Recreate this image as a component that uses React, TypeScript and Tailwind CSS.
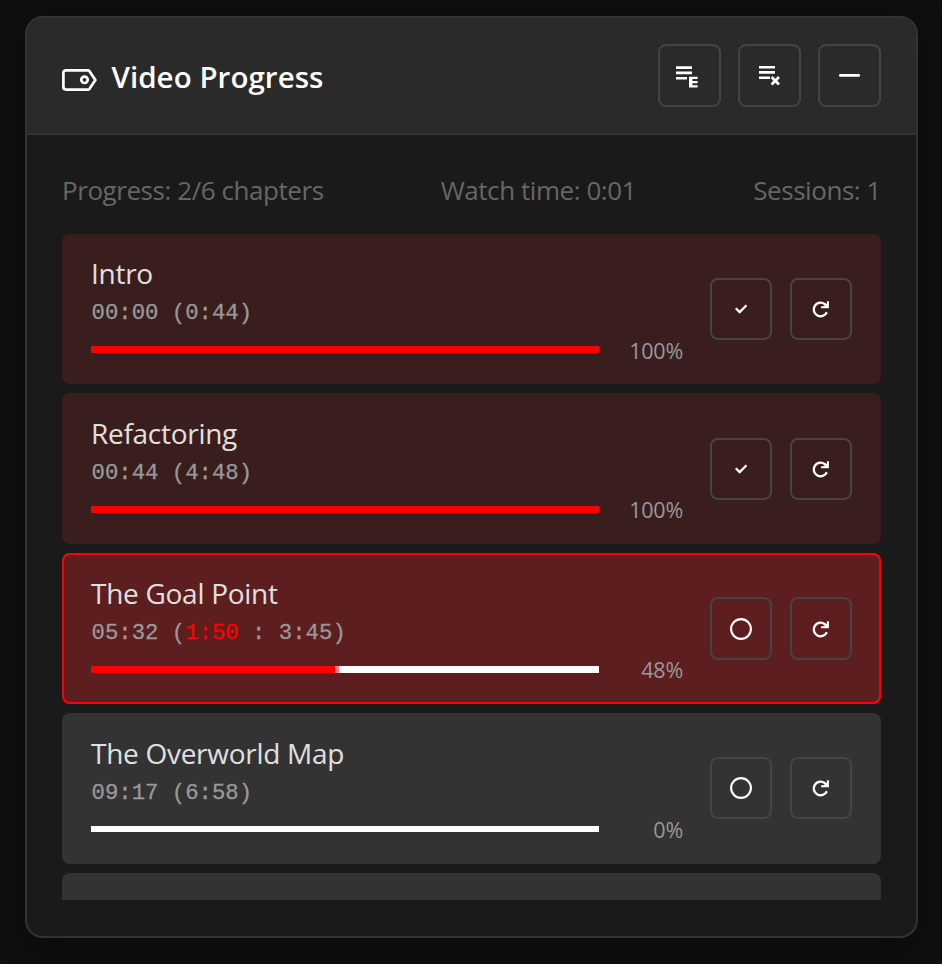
import type { ReactNode } from "react";

type Chapter = {
  title: string;
  start: string;
  length: string;
  elapsed?: string;
  percent: number;
  row: string;
  body: string;
  bar: string;
  controls: string;
  label: string;
};

const chapters: Chapter[] = [
  { title: "Intro", start: "00:00", length: "0:44", percent: 100, row: "h-[150px] bg-[#3a1e1e]", body: "", bar: "h-[7px]", controls: "mt-[44px] h-[62px]", label: "mt-[-9px]" },
  { title: "Refactoring", start: "00:44", length: "4:48", percent: 100, row: "h-[151px] bg-[#3a1e1e]", body: "pt-px", bar: "h-[7px]", controls: "mt-[45px] h-[62px]", label: "mt-[-10px]" },
  { title: "The Goal Point", start: "05:32", length: "3:45", elapsed: "1:50", percent: 48, row: "h-[151px] bg-[#5c1e1e] ring-2 ring-inset ring-[#ff0000]", body: "pt-px", bar: "h-[7px]", controls: "mt-[44px] h-[63px]", label: "mt-[-10px]" },
  { title: "The Overworld Map", start: "09:17", length: "6:58", percent: 0, row: "h-[151px] bg-[#333333]", body: "pt-px", bar: "h-[6px]", controls: "mt-[44px] h-[62px]", label: "mt-[-10px]" },
];

function HeaderButton({ label, children }: { label: string; children: ReactNode }) {
  return (
    <button aria-label={label} className="flex size-[63px] items-center justify-center rounded-lg border-2 border-[#444444]">
      {children}
    </button>
  );
}

function RowButton({ label, children }: { label: string; children: ReactNode }) {
  return (
    <button aria-label={label} className="flex h-full w-[62px] items-center justify-center rounded-lg border-2 border-[#444444]">
      {children}
    </button>
  );
}

function TagIcon() {
  return (
    <svg className="mt-[9px] h-[22px] w-[35px]" viewBox="0 0 35 22" fill="none" stroke="white" strokeWidth="2.7" strokeLinejoin="round">
      <path d="M4 1.4h21.8c.7 0 1.3.3 1.7.8L33.4 11l-5.9 8.8c-.4.5-1 .8-1.7.8H4c-1.5 0-2.6-1-2.6-2.5V3.9C1.4 2.4 2.5 1.4 4 1.4Z" />
      <circle cx="22.5" cy="10.8" r="3.2" />
    </svg>
  );
}

function ExportIcon() {
  return (
    <svg className="size-[59px] shrink-0" viewBox="0 0 59 59" fill="white">
      <path d="M16 20.2h16v2.7H16zM16 25.6h16v2.7H16zM16 31h11v2.6H16z" />
      <path d="M29 30.7h8.6V33h-5.2v2.1h5.2v2.2h-5.2v1.9h5.2v2.4H29z" />
    </svg>
  );
}

function ClearIcon() {
  return (
    <svg className="size-[59px] shrink-0" viewBox="0 0 59 59" fill="white">
      <path d="M19 20h16v2.5H19zM19 25.1h16v2.6H19zM19 30.4h11v2.6H19z" />
      <path d="m31.6 31.1 7.4 7.4M39 31.1l-7.4 7.4" stroke="white" strokeWidth="2.8" />
    </svg>
  );
}

function MinusIcon() {
  return (
    <svg className="size-[59px] shrink-0" viewBox="0 0 59 59">
      <rect x="19" y="28" width="21" height="2.8" rx="1.2" fill="white" />
    </svg>
  );
}

function CheckIcon() {
  return (
    <svg className="size-[58px] shrink-0" viewBox="0 0 58 58" fill="none" stroke="white" strokeWidth="2.3">
      <path d="m23.8 28.2 3.9 3.9 6.8-6.8" />
    </svg>
  );
}

function CircleIcon() {
  return (
    <svg className="size-[58px] shrink-0" viewBox="0 0 58 58" fill="none" stroke="white" strokeWidth="2.1">
      <circle cx="29" cy="29" r="9.9" />
    </svg>
  );
}

function ReloadIcon() {
  return (
    <svg className="size-[58px] shrink-0" viewBox="0 0 58 58" fill="none" stroke="white" strokeWidth="2.4">
      <path d="M34.8 32.2A6.8 6.8 0 1 1 32.6 24l2 1.7" />
      <path d="M35.9 21.2v6h-6.8" strokeWidth="2" />
      <path d="m31.4 27 4.6-4.4V27z" fill="white" stroke="none" />
    </svg>
  );
}

function ChapterRow({ chapter }: { chapter: Chapter }) {
  const { title, start, length, elapsed, percent, row, body, bar, controls, label } = chapter;
  return (
    <li className={`flex shrink-0 rounded-lg px-[29px] ${row}`}>
      <div className={`w-[592px] ${body}`}>
        <h2 className="mt-[19px] h-[42px] text-[28px] leading-[40px] tracking-[-0.28px] text-[#e0e0e0]">{title}</h2>
        <p className="h-[37px] whitespace-pre pl-[0.5px] font-['Liberation_Mono',monospace] text-[22.3px] leading-[37px] text-[#999999] [-webkit-text-stroke-width:0.3px]">
          {start} ({elapsed && <><span className="text-[#ff0000]">{elapsed}</span> : </>}{length})
        </p>
        <div className="mt-[14px] flex items-start justify-between">
          <div className={`flex w-[508px] bg-white ${bar}`}>
            <div className="bg-[#ff0000]" style={{ width: `${percent}%` }} />
            {percent > 0 && percent < 100 && <div className="w-1 bg-[#ff8080]" />}
          </div>
          <span className={`font-['Open_Sans',sans-serif] text-[21.5px] leading-[28px] tracking-[-0.2px] text-[#999999] ${label}`}>{percent}%</span>
        </div>
      </div>
      <div className={`ml-[27px] flex gap-[18px] ${controls}`}>
        <RowButton label="Toggle complete">{percent === 100 ? <CheckIcon /> : <CircleIcon />}</RowButton>
        <RowButton label="Restart chapter"><ReloadIcon /></RowButton>
      </div>
    </li>
  );
}

export default function App() {
  return (
    <main className="h-[964px] w-[942px] overflow-hidden bg-[#0f0f0f] pl-[25px] pt-[16px] font-['Open_Sans',sans-serif]">
      <section className="flex h-[922px] w-[893px] flex-col overflow-hidden rounded-[18px] border-2 border-[#333333] bg-[#1a1a1a] shadow-[0_8px_32px_rgba(0,0,0,0.3)]">
        <header className="flex h-[117px] shrink-0 items-center justify-between border-b-2 border-[#333333] bg-[#2a2a2a] px-[35px]">
          <div className="flex items-center gap-[14px]">
            <TagIcon />
            <h1 className="mt-[2px] pl-[0.5px] text-[29.5px] font-semibold leading-[40px] tracking-[0.05px] text-white">Video Progress</h1>
          </div>
          <div className="flex gap-[17px]">
            <HeaderButton label="Export"><ExportIcon /></HeaderButton>
            <HeaderButton label="Clear"><ClearIcon /></HeaderButton>
            <HeaderButton label="Minimize"><MinusIcon /></HeaderButton>
          </div>
        </header>
        <div className="flex h-[801px] flex-col px-[35px] pt-[37px]">
          <div className="flex h-[36px] shrink-0 justify-between text-[26px] leading-[36px] tracking-[-0.44px] text-[#666666]">
            <span>Progress: 2/6 chapters</span>
            <span>Watch time: 0:01</span>
            <span>Sessions: 1</span>
          </div>
          <ul className="mt-[26px] flex h-[666px] flex-col gap-[9px] overflow-hidden">
            {chapters.map((c) => <ChapterRow key={c.title} chapter={c} />)}
            <li className="h-[151px] shrink-0 rounded-lg bg-[#333333]" />
          </ul>
        </div>
      </section>
    </main>
  );
}
